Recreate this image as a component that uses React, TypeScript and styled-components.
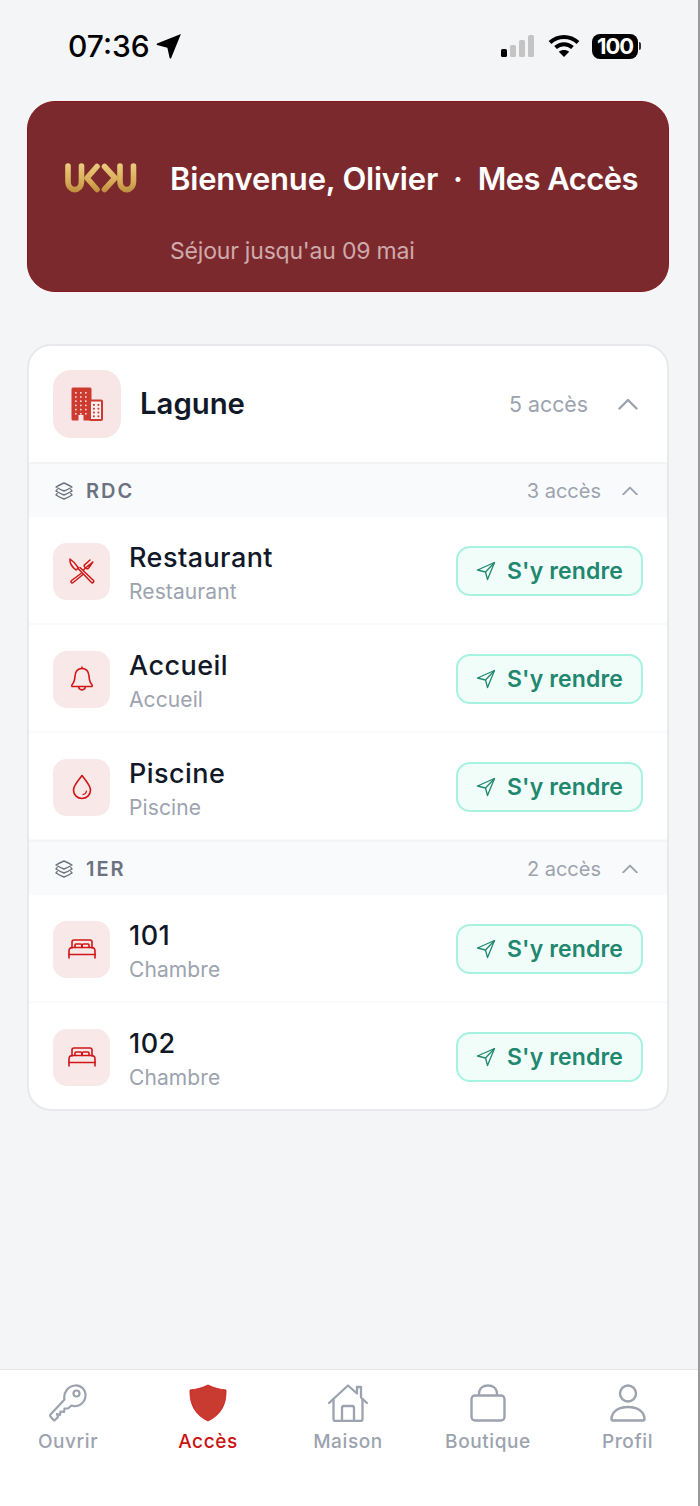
import React, { FC, ReactNode } from 'react'
import styled, { createGlobalStyle } from 'styled-components'

const GlobalStyle = createGlobalStyle`
  html, body {
    margin: 0;
    padding: 0;
    background: #f4f5f7;
  }
  * {
    box-sizing: border-box;
  }
`

const Page = styled.div`
  width: 700px;
  height: 1506px;
  display: flex;
  flex-direction: column;
  background: #f4f5f7;
  border-right: 2px solid #9a9a9c;
  font-family: Inter, 'Liberation Sans', sans-serif;
  overflow: hidden;
`

const StatusBar = styled.div`
  height: 101px;
  flex: none;
  display: flex;
  align-items: flex-start;
  justify-content: space-between;
  padding: 28px 60px 0 68px;
  color: #000;
`

const Clock = styled.div`
  display: flex;
  align-items: center;
  gap: 6px;
  height: 36px;
  font-size: 30px;
  font-weight: 500;
`

const StatusIcons = styled.div`
  display: flex;
  align-items: center;
  gap: 12px;
  height: 36px;
`

const Battery = styled.div`
  position: relative;
  width: 46px;
  height: 25px;
  border-radius: 8px;
  background: #000;
  color: #fff;
  font-size: 22px;
  font-weight: 700;
  letter-spacing: -1px;
  line-height: 25px;
  text-align: center;
  &::after {
    content: '';
    position: absolute;
    right: -3px;
    top: 8px;
    width: 2px;
    height: 8px;
    border-radius: 0 2px 2px 0;
    background: #333;
  }
`

const Content = styled.div`
  flex: 1;
  padding: 0 29px 0 27px;
  display: flex;
  flex-direction: column;
  gap: 52px;
`

const Hero = styled.div`
  height: 191px;
  flex: none;
  border-radius: 28px;
  background: #7c292e;
  border: 1px solid #84181f;
  display: grid;
  grid-template-columns: 142px 1fr;
  grid-template-rows: 1fr auto;
  padding: 52px 0 26px;
`

const LogoCell = styled.div`
  display: flex;
  align-items: center;
  padding-left: 37px;
  height: 48px;
`

const HeroTitle = styled.div`
  display: flex;
  align-items: center;
  height: 48px;
  color: #fff;
  font-size: 31px;
  font-weight: 600;
  letter-spacing: -0.2px;
  white-space: nowrap;
`

const HeroDot = styled.span`
  margin: 0 15px;
`

const HeroPage = styled.span`
  letter-spacing: -0.55px;
`

const HeroSub = styled.div`
  grid-column: 2;
  color: #cfa9ab;
  font-size: 23px;
  line-height: 28px;
  letter-spacing: -0.2px;
`

const Card = styled.div`
  background: #fff;
  border: 2px solid #e7e9ec;
  border-radius: 24px;
  overflow: hidden;
`

const CardHead = styled.div`
  height: 116px;
  display: flex;
  align-items: center;
  padding: 0 29px 1px 24px;
`

const BuildingTile = styled.div`
  width: 68px;
  height: 68px;
  border-radius: 18px;
  background: #f8e6e6;
  display: flex;
  align-items: center;
  justify-content: center;
  margin-right: 19px;
`

const CardTitle = styled.div`
  flex: 1;
  font-size: 29.3px;
  font-weight: 600;
  color: #111827;
`

const Count = styled.span<{ $big?: boolean }>`
  font-size: ${({ $big }) => ($big ? '21.3px' : '20px')};
  color: #9ca3af;
  margin-right: ${({ $big }) => ($big ? '30px' : '21px')};
`

const Floor = styled.div`
  & + & {
    margin-top: -1px;
  }
`

const SectionHead = styled.div`
  height: 55px;
  display: flex;
  align-items: center;
  background: #f9fafb;
  border-top: 2px solid #f3f4f6;
  padding: 0 29px 0 25px;
`

const SectionName = styled.div`
  flex: 1;
  display: flex;
  align-items: center;
  gap: 12px;
  font-size: 20px;
  font-weight: 600;
  letter-spacing: 2px;
  color: #6b7280;
`

const Row = styled.div<{ $last?: boolean }>`
  height: ${({ $last }) => ($last ? '106px' : '108px')};
  padding: ${({ $last }) => ($last ? '2px' : '0')} 24px 0;
  display: flex;
  align-items: center;
  box-shadow: ${({ $last }) => ($last ? 'none' : 'inset 0 -2px 0 #f9fafb')};
`

const IconTile = styled.div`
  width: 57px;
  height: 57px;
  flex: none;
  border-radius: 14px;
  background: #f8e8e8;
  display: flex;
  align-items: center;
  justify-content: center;
  margin-right: 19px;
`

const RowText = styled.div`
  flex: 1;
  display: flex;
  flex-direction: column;
  gap: 4px;
  padding-top: 3px;
`

const RowName = styled.div`
  font-size: 27px;
  line-height: 34px;
  font-weight: 450;
  letter-spacing: 0.45px;
  color: #111827;
`

const RowKind = styled.div`
  font-size: 21px;
  line-height: 26px;
  letter-spacing: 0.1px;
  color: #9ca3af;
`

const GoButton = styled.button`
  width: 187px;
  height: 50px;
  display: flex;
  align-items: center;
  justify-content: center;
  gap: 11px;
  padding: 0;
  border: 2px solid #a7f3e0;
  border-radius: 14px;
  background: #f0fdf9;
  color: #22876f;
  font-family: inherit;
  font-size: 23px;
  font-weight: 600;
  letter-spacing: 0.15px;
`

const TabBar = styled.div`
  height: 137px;
  flex: none;
  background: #fff;
  border-top: 1px solid #e5e7eb;
  display: grid;
  grid-template-columns: 136px 144px 136px 144px 135px;
  padding-top: 14px;
`

const Tab = styled.div<{ $active?: boolean }>`
  display: flex;
  flex-direction: column;
  align-items: center;
  gap: 8px;
  color: ${({ $active }) => ($active ? '#cc1111' : '#9ca3af')};
  font-size: 19px;
  font-weight: 500;
  letter-spacing: 0.6px;
  line-height: 24px;
`

const TabIcon = styled.div`
  height: 38px;
  display: flex;
  align-items: center;
  justify-content: center;
`

const Arrow: FC = () => (
  <svg width="26" height="26" viewBox="0 0 24 24">
    <path d="M23 1 L14 23 Q13.5 24 12.6 23 L10.5 13.5 L1 11 Q0 10.4 1 9.8 Z" fill="#000" />
  </svg>
)

const Signal: FC = () => (
  <svg width="36" height="24" viewBox="0 0 36 24">
    <rect x="1" y="15" width="6" height="8" rx="1.5" fill="#000" />
    <rect x="10" y="11" width="6" height="12" rx="1.5" fill="#c4c4c4" />
    <rect x="19" y="6" width="6" height="17" rx="1.5" fill="#c4c4c4" />
    <rect x="28" y="1" width="6" height="22" rx="1.5" fill="#c4c4c4" />
  </svg>
)

const Wifi: FC = () => (
  <svg width="32" height="24" viewBox="0 0 32 24" fill="none">
    <path d="M2 8.5 C10 1 22 1 30 8.5" stroke="#000" strokeWidth="4" />
    <path d="M7.5 13.5 C12.5 9 19.5 9 24.5 13.5" stroke="#000" strokeWidth="4" />
    <path d="M16 23 L10.8 17.8 C13.5 15.4 18.5 15.4 21.2 17.8 Z" fill="#000" />
  </svg>
)

const Logo: FC = () => (
  <svg width="72" height="30" viewBox="0 0 72 30" fill="none" strokeLinecap="round" strokeLinejoin="round">
    <defs>
      <linearGradient id="gold" gradientUnits="userSpaceOnUse" x1="0" y1="0" x2="0" y2="30">
        <stop offset="0" stopColor="#eccd80" />
        <stop offset="0.6" stopColor="#d8ad58" />
        <stop offset="1" stopColor="#bb8c3e" />
      </linearGradient>
    </defs>
    <g stroke="url(#gold)" strokeWidth="5.6">
      <path d="M3 3 V18 C3 29.5 16.5 29.5 16.5 18 V3" />
      <path d="M32 3.5 L22 15 L32 26.5" />
      <path d="M39.5 3.5 L50 15 L39.5 26.5" />
      <path d="M55 3 V18 C55 29.5 68.5 29.5 68.5 18 V3" />
    </g>
  </svg>
)

const Building: FC = () => (
  <svg width="32" height="34" viewBox="0 0 32 34">
    <rect x="0.5" y="0.5" width="20" height="33" rx="1.5" fill="#cc3a30" />
    <rect x="19" y="13.5" width="12" height="19.5" rx="1" fill="#fbeeee" stroke="#cc3a30" strokeWidth="2" />
    <rect x="7.5" y="28" width="5" height="6" fill="#f8e6e6" />
    {[0, 1, 2, 3, 4, 5].map((r) =>
      [0, 1, 2].map((c) => (
        <rect key={`${r}-${c}`} x={4 + c * 5} y={5 + r * 4.2} width="1.6" height="1.6" fill="#f9dcd9" />
      )),
    )}
    {[0, 1, 2, 3].map((r) =>
      [0, 1].map((c) => (
        <rect key={`b${r}-${c}`} x={22 + c * 4.5} y={17 + r * 3.8} width="1.8" height="1.8" fill="#cc3a30" />
      )),
    )}
  </svg>
)

const Layers: FC = () => (
  <svg width="20" height="18" viewBox="0 0 20 18" fill="none" stroke="#6b7280" strokeWidth="1.4" strokeLinejoin="round">
    <path d="M10 1 C13 2.2 15.5 3.4 18 5 C15.5 6.6 13 7.8 10 9 C7 7.8 4.5 6.6 2 5 C4.5 3.4 7 2.2 10 1 Z" />
    <path d="M3.6 7.2 C2.6 7.9 2.2 8.4 2 9 C4.5 10.6 7 11.8 10 13 C13 11.8 15.5 10.6 18 9 C17.8 8.4 17.4 7.9 16.4 7.2" />
    <path d="M3.6 11.2 C2.6 11.9 2.2 12.4 2 13 C4.5 14.6 7 15.8 10 17 C13 15.8 15.5 14.6 18 13 C17.8 12.4 17.4 11.9 16.4 11.2" />
  </svg>
)

const Chevron: FC<{ size: number }> = ({ size }) => (
  <svg width={size} height={size * 0.6} viewBox="0 0 20 12" fill="none" stroke="#9ca3af" strokeWidth="2.4" strokeLinecap="round" strokeLinejoin="round">
    <path d="M1.5 10.5 L10 2 L18.5 10.5" />
  </svg>
)

const Cutlery: FC = () => (
  <svg width="28" height="28" viewBox="0 0 28 28" fill="none" stroke="#d01616" strokeWidth="1.5" strokeLinecap="round" strokeLinejoin="round">
    <path d="M2 2 C1.5 6 4 10 8 13 L10.5 11 C8 7 5 4 2 2 Z" />
    <path d="M10.5 12 L23.5 25.5 C24.5 26.5 26.5 25 25.5 23.5 L12 10.5" />
    <path d="M13 16.5 L3.5 23.5 C2 25 3.8 26.8 5.2 25.5 L15 17.5" />
    <path d="M15.5 13 L17.5 11 M17.5 11 L21 8 M17 7.5 L22 3 M19.5 9.5 L24.8 5 M17.5 11 C15.5 9 16 8 17 7.5 M17.5 11 C19.5 12.5 20.5 11.5 21 10.5 L24.8 5" />
  </svg>
)

const Bell: FC = () => (
  <svg width="24" height="28" viewBox="0 0 24 28" fill="none" stroke="#d01616" strokeWidth="1.6" strokeLinejoin="round">
    <path d="M2 21.5 H22 C22.6 20.5 22.3 19.8 21.5 19 C19.5 17 19.3 14.5 19 11 C18.6 6.5 16 3.5 12 3.5 C8 3.5 5.4 6.5 5 11 C4.7 14.5 4.5 17 2.5 19 C1.7 19.8 1.4 20.5 2 21.5 Z" />
    <path d="M12 3.5 V1.5" />
    <path d="M8.5 21.5 C9 26 15 26 15.5 21.5" />
  </svg>
)

const Drop: FC = () => (
  <svg width="20" height="26" viewBox="0 0 20 26" fill="none" stroke="#d01616" strokeWidth="1.6" strokeLinecap="round" strokeLinejoin="round">
    <path d="M10 1.5 C6 7 1.5 11.5 1.5 16 C1.5 21 5.5 24.5 10 24.5 C14.5 24.5 18.5 21 18.5 16 C18.5 11.5 14 7 10 1.5 Z" />
    <path d="M14.5 17 C14.3 18.8 13 20.2 11 20.6" strokeWidth="1.2" />
  </svg>
)

const Bed: FC = () => (
  <svg width="28" height="20" viewBox="0 0 28 20" fill="none" stroke="#d01616" strokeWidth="1.6" strokeLinecap="round" strokeLinejoin="round">
    <path d="M4 9 V3 C4 2 5 1 6 1 H22 C23 1 24 2 24 3 V9" />
    <path d="M7 8.5 V6 C7 5.5 7.5 5 8 5 H12.5 C13.2 5 13.8 5.5 13.8 6 V8.5 M14.2 8.5 V6 C14.2 5.5 14.8 5 15.5 5 H20 C20.5 5 21 5.5 21 6 V8.5" />
    <path d="M1 19 V12 C1 10 2.5 8.5 4.5 8.5 H23.5 C25.5 8.5 27 10 27 12 V19" />
    <path d="M1 15.5 H27" />
  </svg>
)

const NavArrow: FC = () => (
  <svg width="20" height="20" viewBox="0 0 20 20" fill="none" stroke="#22876f" strokeWidth="1.3" strokeLinejoin="round">
    <path d="M18.5 1.5 L1.5 9 L9.5 11 L11.5 18.5 Z" />
    <path d="M9.5 11 L18.5 1.5" />
  </svg>
)

const Key: FC = () => (
  <svg width="38" height="38" viewBox="0 0 38 38" fill="none" stroke="#9ca3af" strokeWidth="2.2" strokeLinecap="round" strokeLinejoin="round">
    <path d="M15.5 15.5 L1.5 30.5 C1 31.2 1 32 1.5 32.5 L4.5 36 C5 36.5 5.6 36.5 6 36 L9 33 L8 30 L11 31 L11.5 27.5 L15 28 L15.5 24.5 L19 24.5 L22.5 21.5 C29 24 36 19 36.5 12 C37 6 32 1 26 1.5 C19 2 14 9 15.5 15.5 Z" />
    <circle cx="27.5" cy="9.5" r="3" />
  </svg>
)

const Shield: FC = () => (
  <svg width="38" height="38" viewBox="0 0 38 38">
    <path d="M19 1 C25 4 31 5.5 37 6 C37.5 20 32 31 19 37 C6 31 0.5 20 1 6 C7 5.5 13 4 19 1 Z" fill="#c93a31" stroke="#cc1111" strokeWidth="0.8" />
  </svg>
)

const House: FC = () => (
  <svg width="40" height="38" viewBox="0 0 40 38" fill="none" stroke="#9ca3af" strokeWidth="2.3" strokeLinecap="round" strokeLinejoin="round">
    <path d="M1 19 L20 1.5 L29 9.5 V3 H33 V13.5 L39 19" />
    <path d="M5.5 15.5 V35 C5.5 36 6 37 7.5 37 H32.5 C34 37 34.5 36 34.5 35 V15.5" />
    <path d="M14 37 V24 C14 23 15 22 16 22 H24 C25 22 26 23 26 24 V37" />
  </svg>
)

const Bag: FC = () => (
  <svg width="36" height="38" viewBox="0 0 36 38" fill="none" stroke="#9ca3af" strokeWidth="2.4" strokeLinejoin="round">
    <rect x="1.5" y="11.5" width="33" height="25" rx="3.5" />
    <path d="M9 11.5 V10 C9 4.5 13 1.5 18 1.5 C23 1.5 27 4.5 27 10 V11.5" />
  </svg>
)

const Person: FC = () => (
  <svg width="36" height="38" viewBox="0 0 36 38" fill="none" stroke="#9ca3af" strokeWidth="2.4" strokeLinejoin="round">
    <circle cx="18" cy="9.5" r="8" />
    <path d="M1.5 34.5 C2 27 9 23 18 23 C27 23 34 27 34.5 34.5 C34.5 36 34 36.5 33 36.5 H3 C2 36.5 1.5 36 1.5 34.5 Z" />
  </svg>
)

type Access = { name: string; kind: string; icon: ReactNode }

const floors: { name: string; count: string; items: Access[] }[] = [
  {
    name: 'RDC',
    count: '3 accès',
    items: [
      { name: 'Restaurant', kind: 'Restaurant', icon: <Cutlery /> },
      { name: 'Accueil', kind: 'Accueil', icon: <Bell /> },
      { name: 'Piscine', kind: 'Piscine', icon: <Drop /> },
    ],
  },
  {
    name: '1ER',
    count: '2 accès',
    items: [
      { name: '101', kind: 'Chambre', icon: <Bed /> },
      { name: '102', kind: 'Chambre', icon: <Bed /> },
    ],
  },
]

const tabs = [
  { label: 'Ouvrir', icon: <Key /> },
  { label: 'Accès', icon: <Shield />, active: true },
  { label: 'Maison', icon: <House /> },
  { label: 'Boutique', icon: <Bag /> },
  { label: 'Profil', icon: <Person /> },
]

const App: FC = () => {
  return (
    <Page>
      <GlobalStyle />
      <StatusBar>
        <Clock>
          07:36
          <Arrow />
        </Clock>
        <StatusIcons>
          <Signal />
          <Wifi />
          <Battery>100</Battery>
        </StatusIcons>
      </StatusBar>
      <Content>
        <Hero>
          <LogoCell>
            <Logo />
          </LogoCell>
          <HeroTitle>
            Bienvenue, Olivier
            <HeroDot>·</HeroDot>
            <HeroPage>Mes Accès</HeroPage>
          </HeroTitle>
          <HeroSub>Séjour jusqu'au 09 mai</HeroSub>
        </Hero>
        <Card>
          <CardHead>
            <BuildingTile>
              <Building />
            </BuildingTile>
            <CardTitle>Lagune</CardTitle>
            <Count $big>5 accès</Count>
            <Chevron size={20} />
          </CardHead>
          {floors.map((floor, fi) => (
            <Floor key={floor.name}>
              <SectionHead>
                <SectionName>
                  <Layers />
                  {floor.name}
                </SectionName>
                <Count>{floor.count}</Count>
                <Chevron size={16} />
              </SectionHead>
              {floor.items.map((item, i) => (
                <Row key={item.name} $last={fi === floors.length - 1 && i === floor.items.length - 1}>
                  <IconTile>{item.icon}</IconTile>
                  <RowText>
                    <RowName>{item.name}</RowName>
                    <RowKind>{item.kind}</RowKind>
                  </RowText>
                  <GoButton>
                    <NavArrow />
                    S'y rendre
                  </GoButton>
                </Row>
              ))}
            </Floor>
          ))}
        </Card>
      </Content>
      <TabBar>
        {tabs.map((tab) => (
          <Tab key={tab.label} $active={tab.active}>
            <TabIcon>{tab.icon}</TabIcon>
            {tab.label}
          </Tab>
        ))}
      </TabBar>
    </Page>
  )
}

export default App
